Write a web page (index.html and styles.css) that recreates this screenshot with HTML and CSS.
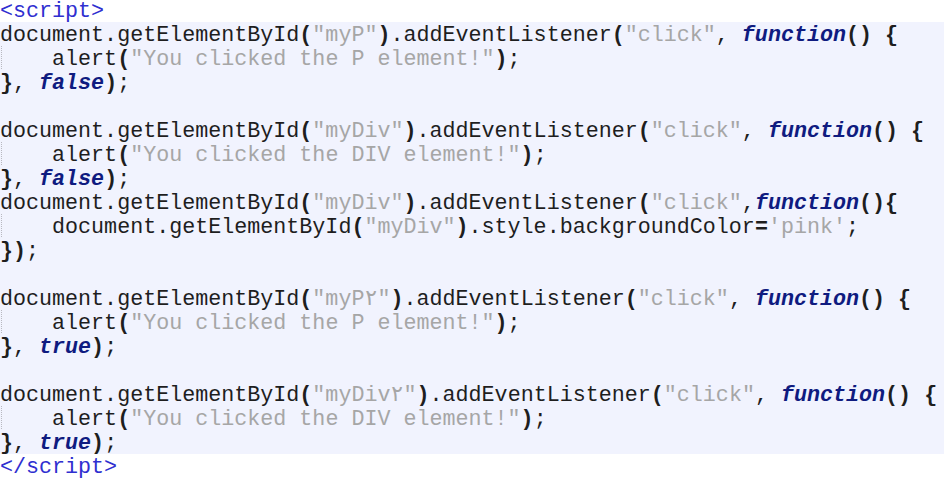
FILE: index.html
```html
<!DOCTYPE html>
<html>
<head>
<meta charset="utf-8">
<link rel="stylesheet" href="styles.css">
</head>
<body>
<div class="page">
<div class="ln tag first">&lt;script&gt;</div>
<div class="code">
<div class="ln">document.getElementById<b>(</b><span class="s">"myP"</span><b>)</b>.addEventListener<b>(</b><span class="s">"click"</span>, <i class="k">function</i><b>()</b> <b>{</b></div>
<div class="ln ind">    alert<b>(</b><span class="s">"You clicked the P element!"</span><b>)</b>;</div>
<div class="ln"><b>}</b>, <i class="k">false</i><b>)</b>;</div>
<div class="ln"> </div>
<div class="ln">document.getElementById<b>(</b><span class="s">"myDiv"</span><b>)</b>.addEventListener<b>(</b><span class="s">"click"</span>, <i class="k">function</i><b>()</b> <b>{</b></div>
<div class="ln ind">    alert<b>(</b><span class="s">"You clicked the DIV element!"</span><b>)</b>;</div>
<div class="ln"><b>}</b>, <i class="k">false</i><b>)</b>;</div>
<div class="ln">document.getElementById<b>(</b><span class="s">"myDiv"</span><b>)</b>.addEventListener<b>(</b><span class="s">"click"</span>,<i class="k">function</i><b>(){</b></div>
<div class="ln ind">    document.getElementById<b>(</b><span class="s">"myDiv"</span><b>)</b>.style.backgroundColor<b>=</b><span class="s">'pink'</span>;</div>
<div class="ln"><b>})</b>;</div>
<div class="ln"> </div>
<div class="ln">document.getElementById<b>(</b><span class="s">"myP٢"</span><b>)</b>.addEventListener<b>(</b><span class="s">"click"</span>, <i class="k">function</i><b>()</b> <b>{</b></div>
<div class="ln ind">    alert<b>(</b><span class="s">"You clicked the P element!"</span><b>)</b>;</div>
<div class="ln"><b>}</b>, <i class="k">true</i><b>)</b>;</div>
<div class="ln"> </div>
<div class="ln">document.getElementById<b>(</b><span class="s">"myDiv٢"</span><b>)</b>.addEventListener<b>(</b><span class="s">"click"</span>, <i class="k">function</i><b>()</b> <b>{</b></div>
<div class="ln ind">    alert<b>(</b><span class="s">"You clicked the DIV element!"</span><b>)</b>;</div>
<div class="ln"><b>}</b>, <i class="k">true</i><b>)</b>;</div>
</div>
<div class="ln tag">&lt;/script&gt;</div>
</div>
</body>
</html>
```
FILE: styles.css
```css
html, body {
  margin: 0;
  padding: 0;
  background: #ffffff;
}
.page {
  font-family: "Liberation Mono", "DejaVu Sans Mono", monospace;
  font-size: 21.7px;
  color: #1e1e1e;
}
.ln {
  height: 24px;
  line-height: 28px;
  white-space: pre;
}
.ln.first {
  height: 22px;
  line-height: 24px;
}
.tag {
  color: #2f2fd0;
}
.code {
  background: #f1f3fe;
}
.ln b {
  font-weight: bold;
}
.s {
  color: #a6a6a6;
}
.k {
  color: #0f1b80;
  font-weight: bold;
  font-style: italic;
}
.ind {
  background-image: linear-gradient(#b8b8c0 50%, transparent 50%);
  background-size: 1px 2px;
  background-position: 1px 0;
  background-repeat: repeat-y;
}
```
